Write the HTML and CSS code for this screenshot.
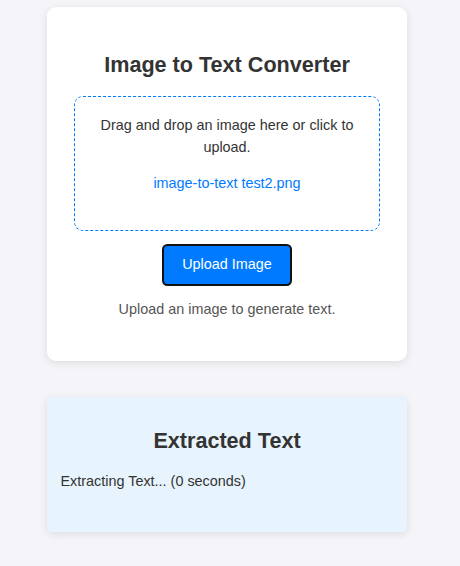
FILE: index.html
```html
<!DOCTYPE html>
<html lang="en">
<head>
<meta charset="utf-8">
<title>Image to Text Converter</title>
<link rel="stylesheet" href="styles.css">
</head>
<body>
<div class="page">
  <section class="card converter">
    <h2 class="title">Image to Text Converter</h2>
    <div class="dropzone">
      <p class="drop-hint">Drag and drop an image here or click to upload.</p>
      <p class="file-name">image-to-text test2.png</p>
    </div>
    <button class="upload-btn" type="button">Upload Image</button>
    <p class="status">Upload an image to generate text.</p>
  </section>
  <section class="card result">
    <h2 class="title">Extracted Text</h2>
    <p class="result-text">Extracting Text... (0 seconds)</p>
  </section>
</div>
</body>
</html>
```
FILE: styles.css
```css
html, body {
  margin: 0;
  padding: 0;
}
body {
  background: #f4f4f9;
  color: #333;
  font-family: "Liberation Sans", Arial, sans-serif;
  font-size: 14.4px;
}
.page {
  display: flex;
  flex-direction: column;
  align-items: flex-start;
  gap: 36px;
  padding: 7px 0 34px 47px;
}
.card {
  width: 360px;
  box-sizing: border-box;
  background: #fff;
  border-radius: 9px;
  box-shadow: 0 2px 8px rgba(0, 0, 0, 0.1);
}
.converter {
  padding: 27px 27px 41px;
  text-align: center;
}
.title {
  font-size: 21.6px;
  font-weight: bold;
  line-height: 25px;
  color: #333;
  text-align: center;
}
.converter .title {
  margin: 17.8px 0 19.2px;
}
.dropzone {
  border: 1.8px dashed #007bff;
  border-radius: 9px;
  padding: 18.2px 18px 35px;
}
.dropzone p {
  margin: 0;
  line-height: 21.6px;
}
.drop-hint {
  color: #333;
}
.dropzone .file-name {
  margin-top: 14.8px;
  color: #007bff;
}
.upload-btn {
  margin-top: 13px;
  height: 42px;
  box-sizing: border-box;
  padding: 0 18px;
  background: #007bff;
  color: #fff;
  border: 2px solid #111;
  border-radius: 5.4px;
  font-family: inherit;
  font-size: 14.4px;
  line-height: 17px;
  cursor: pointer;
}
.status {
  margin: 13px 0 0;
  line-height: 21.6px;
  color: #555;
}
.result {
  background: #e8f4fd;
  border-radius: 5.4px;
  padding: 31px 13.5px 39.4px;
}
.result .title {
  margin: 0 0 17.6px;
}
.result-text {
  margin: 0;
  line-height: 21.6px;
  color: #333;
}
```
